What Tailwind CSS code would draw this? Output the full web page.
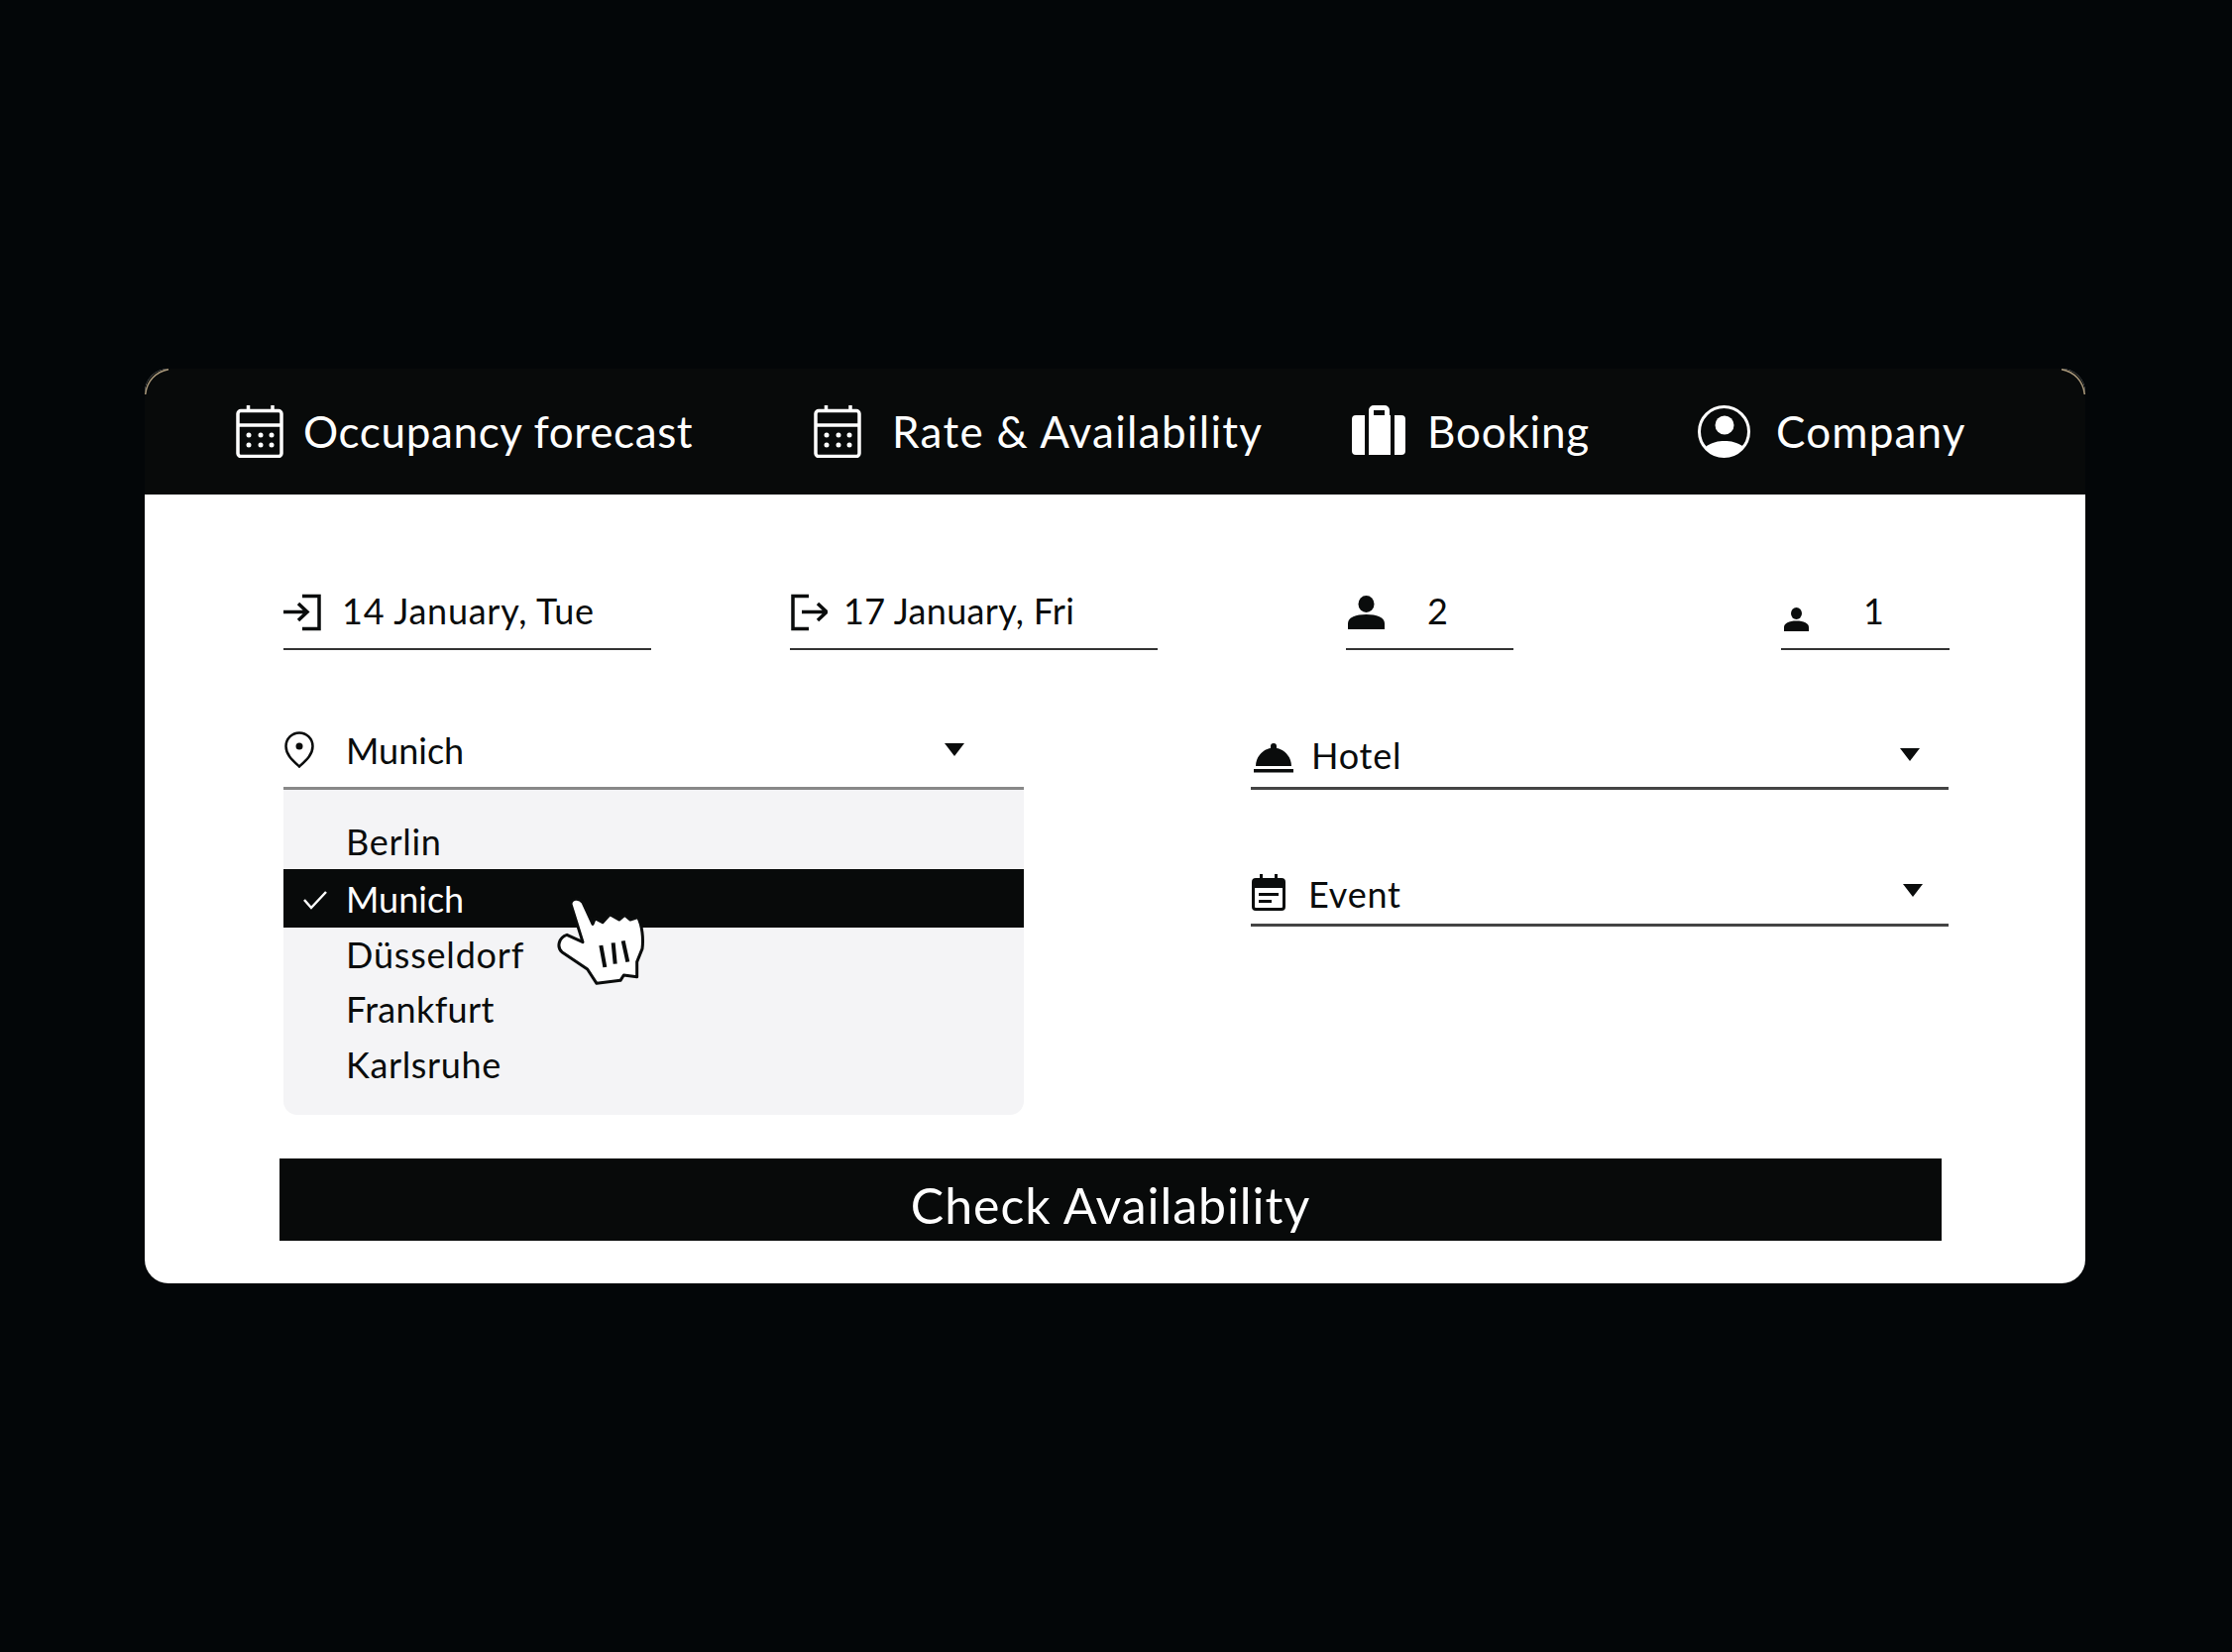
<!DOCTYPE html>
<html lang="en">
<head>
<meta charset="UTF-8">
<title>Check Availability</title>
<script src="https://cdn.jsdelivr.net/npm/@tailwindcss/browser@4"></script>
</head>
<body class="bg-[#030608] font-['Lato',sans-serif] text-[#0a0c0c]">
<div class="w-[2252px] h-[1667px] pt-[372px] pl-[146px]">
  <!-- card -->
  <div class="relative w-[1958px] h-[923px] bg-white rounded-[24px]">
    <!-- nav -->
    <div class="h-[127px] bg-[#080a0a] rounded-t-[24px] flex items-center pl-[92px] text-white text-[44px] pb-[2px]">
      <div class="w-[583px] flex items-center gap-[20px]">
        <svg width="48" height="54" viewBox="0 0 48 54" fill="none" stroke="white" stroke-width="3.5"><rect x="2" y="6.500" width="44" height="46" rx="3"/><path d="M2 21h44" /><path d="M12.500 1v5M37 1v5"/><g fill="white" stroke="none"><circle cx="13" cy="31" r="2.500"/><circle cx="25" cy="31" r="2.500"/><circle cx="36" cy="31" r="2.500"/><circle cx="13" cy="41" r="2.500"/><circle cx="25" cy="41" r="2.500"/><circle cx="36" cy="41" r="2.500"/></g></svg>
        <span class="tracking-[0.64px]">Occupancy forecast</span>
      </div>
      <div class="w-[543px] flex items-center gap-[31px]">
        <svg width="48" height="54" viewBox="0 0 48 54" fill="none" stroke="white" stroke-width="3.5"><rect x="2" y="6.500" width="44" height="46" rx="3"/><path d="M2 21h44" /><path d="M12.500 1v5M37 1v5"/><g fill="white" stroke="none"><circle cx="13" cy="31" r="2.500"/><circle cx="25" cy="31" r="2.500"/><circle cx="36" cy="31" r="2.500"/><circle cx="13" cy="41" r="2.500"/><circle cx="25" cy="41" r="2.500"/><circle cx="36" cy="41" r="2.500"/></g></svg>
        <span class="tracking-[1.3px]">Rate &amp; Availability</span>
      </div>
      <div class="w-[348px] flex items-center gap-[22px]">
        <svg width="54" height="51" viewBox="0 0 54 51" fill="white"><path d="M13 10v40H4a4 4 0 0 1-4-4V14a4 4 0 0 1 4-4zM43 10h7a4 4 0 0 1 4 4v32a4 4 0 0 1-4 4h-7zM17 10V5a5 5 0 0 1 5-5h11a5 5 0 0 1 5 5v5h1v40H17zM22 10h11V5H22z" fill-rule="evenodd"/></svg>
        <span class="tracking-[0.8px]">Booking</span>
      </div>
      <div class="flex items-center gap-[26px]">
        <svg width="54" height="54" viewBox="0 0 54 54" fill="none"><circle cx="27.500" cy="27.500" r="25" stroke="white" stroke-width="3"/><circle cx="28" cy="21" r="9.500" fill="white"/><path d="M9 43C15 38 22 37 28 37S41 38 47 43C42 50 35 53 28 53S14 50 9 43z" fill="white"/></svg>
        <span class="tracking-[1.2px]">Company</span>
      </div>
    </div>

    <!-- form -->
    <div class="pl-[140px] pt-[91px]">
      <div class="flex text-[36px]">
        <div class="w-[371px] h-[66px] border-b-2 border-[#333] flex items-center gap-[19px] pb-[8px]">
          <svg width="40" height="38" viewBox="0 0 40 38" fill="none" stroke="#0a0c0c" stroke-width="3.500"><path d="M19 2.500h17v33H19"/><path d="M0 18.500h24M15 10l9 8.500-9 8.500"/></svg>
          <span class="-mt-[5px] tracking-[0.75px]">14 January, Tue</span>
        </div>
        <div class="w-[371px] h-[66px] ml-[140px] border-b-2 border-[#333] flex items-center gap-[16px] pb-[8px]">
          <svg width="38" height="38" viewBox="0 0 38 38" fill="none" stroke="#0a0c0c" stroke-width="3.500"><path d="M19 2.500H3v33h16"/><path d="M12 18.500h25M28 10l9 8.500-9 8.500"/></svg>
          <span class="-mt-[5px] tracking-[0.3px]">17 January, Fri</span>
        </div>
        <div class="w-[169px] h-[66px] ml-[190px] border-b-2 border-[#333] flex items-center pb-[8px]">
          <svg class="ml-[2px]" width="37" height="34" viewBox="0 0 37 34" fill="#0a0c0c"><ellipse cx="18.500" cy="8.500" rx="8" ry="8.500"/><path d="M0 34V28c0-6 8-9 18.500-9S37 22 37 28v6z"/></svg>
          <span class="ml-[43px] -mt-[5px]">2</span>
        </div>
        <div class="w-[170px] h-[66px] ml-[270px] border-b-2 border-[#333] flex items-center pb-[8px]">
          <svg class="ml-[3px] mt-[14px]" width="25" height="24" viewBox="0 0 25 24" fill="#0a0c0c"><ellipse cx="12.500" cy="6" rx="5.500" ry="6"/><path d="M0 24v-4c0-4 5-6.500 12.500-6.500S25 16 25 20v4z"/></svg>
          <span class="ml-[55px] -mt-[5px]">1</span>
        </div>
      </div>

      <div class="flex mt-[60px] text-[36px]">
        <!-- city select -->
        <div class="w-[747px]">
          <div class="h-[81px] border-b-[3px] border-[#888] flex items-center pt-[3px]">
            <svg class="ml-[1px]" width="30" height="37" viewBox="0 0 30 37" fill="none"><path d="M15 35.500C9 30 1.500 24 1.500 15a13.500 13.500 0 0 1 27 0c0 9-7.500 15-13.500 20.500z" stroke="#0a0c0c" stroke-width="2.500"/><circle cx="15" cy="15" r="3.500" fill="#0a0c0c"/></svg>
            <span class="ml-[32px]">Munich</span>
            <svg class="ml-auto mr-[60px]" width="20" height="13" viewBox="0 0 20 13" fill="#0a0c0c"><path d="M0 0h20L10 13z"/></svg>
          </div>
          <div class="bg-[#f4f4f6] rounded-b-[14px] pt-[24px] pb-[23px]">
            <div class="h-[56px] flex items-center pl-[63px] tracking-[0.7px]">Berlin</div>
            <div class="relative h-[59px] flex items-center pl-[63px] bg-[#080a0a] text-white">
              <svg class="absolute left-[20px] top-[21px]" width="24" height="20" viewBox="0 0 24 20" fill="none" stroke="white" stroke-width="2.500"><path d="M1 10l7 8L23 2"/></svg>
              Munich
            </div>
            <div class="h-[54px] flex items-center pl-[63px] tracking-[0.8px]">Düsseldorf</div>
            <div class="h-[56px] flex items-center pl-[63px] tracking-[0.35px]">Frankfurt</div>
            <div class="h-[56px] flex items-center pl-[63px] tracking-[0.65px]">Karlsruhe</div>
          </div>
        </div>
        <!-- hotel / event -->
        <div class="w-[704px] ml-[229px]">
          <div class="h-[81px] border-b-[3px] border-[#444] flex items-end pb-[15px]">
            <svg class="ml-[3px] -mb-[1px]" width="40" height="30" viewBox="0 0 40 30" fill="#0a0c0c"><path d="M2 23C2 13 10 6 17 5V3a3 3 0 0 1 6 0v2c7 1 15 8 15 18z"/><path d="M0 26h40v3.500H0z"/></svg>
            <span class="ml-[18px] leading-[34px] tracking-[0.8px]">Hotel</span>
            <svg class="ml-auto mr-[29px] mb-[11px]" width="20" height="13" viewBox="0 0 20 13" fill="#0a0c0c"><path d="M0 0h20L10 13z"/></svg>
          </div>
          <div class="h-[138px] border-b-[3px] border-[#444] flex items-end pb-[13px]">
            <svg class="ml-[1px]" width="34" height="37" viewBox="0 0 34 37" fill="#0a0c0c"><path d="M8 0h3v4h12V0h3v4h4a4 4 0 0 1 4 4v25a4 4 0 0 1-4 4H4a4 4 0 0 1-4-4V8a4 4 0 0 1 4-4h4zM3 14v19a1 1 0 0 0 1 1h26a1 1 0 0 0 1-1V14z" fill-rule="evenodd"/><path d="M7 19h20v3H7zM7 26h13v3H7z"/></svg>
            <span class="ml-[23px] leading-[34px] tracking-[0.8px]">Event</span>
            <svg class="ml-auto mr-[26px] mb-[14px]" width="20" height="13" viewBox="0 0 20 13" fill="#0a0c0c"><path d="M0 0h20L10 13z"/></svg>
          </div>
        </div>
      </div>

      <button class="block -ml-[4px] mt-[44px] w-[1677px] h-[83px] bg-[#080a0a] text-white text-[50px] tracking-[0.95px] pt-[10px]">Check Availability</button>
    </div>

    <!-- corner hairlines -->
    <svg class="absolute left-0 top-0" width="26" height="28" viewBox="0 0 26 28" fill="none"><path d="M.7 26C2 13 11 3 24 .7" stroke="#a8977a" stroke-width="1.500"/></svg>
    <svg class="absolute right-0 top-0" width="26" height="28" viewBox="0 0 26 28" fill="none"><path d="M25.300 26C24 13 15 3 2 .7" stroke="#a8977a" stroke-width="1.500"/></svg>

    <!-- hand cursor -->
    <svg class="absolute left-[416px] top-[532px]" width="90" height="90" viewBox="870 610 270 270" fill="white" stroke="#0a0c0c" stroke-width="9" stroke-linejoin="round">
      <path d="M912 635C912 620 935 612 948 630L978 695 985 678 1008 690 1030 666 1058 682 1075 668 1092 682 1115 675C1128 700 1132 740 1128 770L1112 810 1112 855 1072 850 1062 866 990 875 962 832 885 780C868 765 876 735 900 728L948 750z"/>
      <path d="M1003 760l12 66M1040 752l6 64M1070 746l14 64" fill="none" stroke-width="12"/>
    </svg>
  </div>
</div>
</body>
</html>
